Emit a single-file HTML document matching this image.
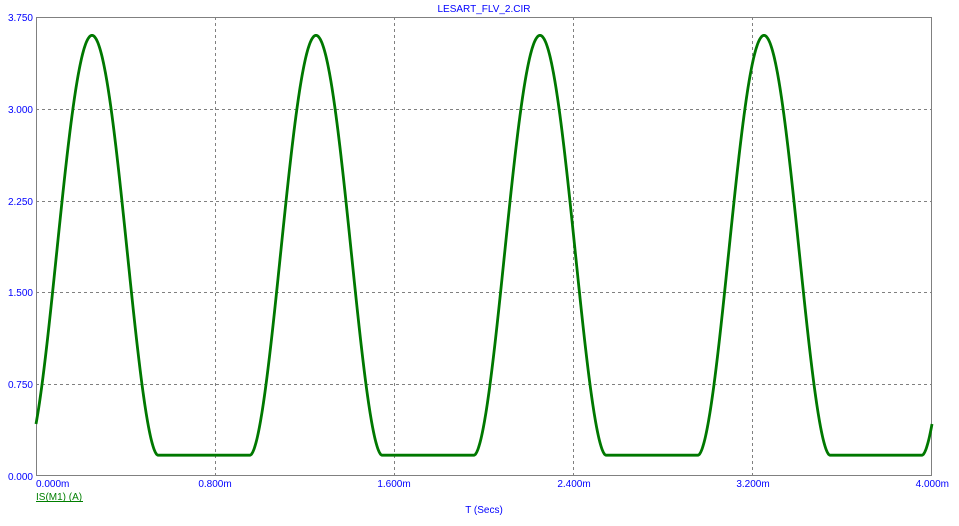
<!DOCTYPE html><html><head><style>body{margin:0;background:#fff;width:959px;height:521px;overflow:hidden}
text{font-family:"Liberation Sans",sans-serif;font-size:10px;fill:#0000ff}</style></head><body>
<svg width="959" height="521" xmlns="http://www.w3.org/2000/svg">
<g stroke="#808080" stroke-dasharray="3,3" stroke-width="1">
<line x1="215.5" y1="17" x2="215.5" y2="476"/><line x1="394.5" y1="17" x2="394.5" y2="476"/><line x1="573.5" y1="17" x2="573.5" y2="476"/><line x1="752.5" y1="17" x2="752.5" y2="476"/>
<line x1="36" y1="109.5" x2="932" y2="109.5"/><line x1="36" y1="201.5" x2="932" y2="201.5"/><line x1="36" y1="292.5" x2="932" y2="292.5"/><line x1="36" y1="384.5" x2="932" y2="384.5"/>
</g>
<rect x="36.5" y="17.5" width="895" height="458" fill="none" stroke="#808080"/>
<path id="w" fill="none" stroke="#007800" stroke-width="2.8"/>
<text x="484" y="12" text-anchor="middle">LESART_FLV_2.CIR</text>
<g text-anchor="end"><text x="33" y="21">3.750</text><text x="33" y="113">3.000</text><text x="33" y="205">2.250</text><text x="33" y="296">1.500</text><text x="33" y="388">0.750</text><text x="33" y="480">0.000</text></g>
<text x="36" y="487">0.000m</text>
<g text-anchor="middle"><text x="215" y="487">0.800m</text><text x="394" y="487">1.600m</text><text x="574" y="487">2.400m</text><text x="753" y="487">3.200m</text></g>
<text x="949" y="487" text-anchor="end">4.000m</text>
<text x="36" y="500" style="fill:#007f00;text-decoration:underline">IS(M1) (A)</text>
<line x1="36" y1="501.5" x2="83" y2="501.5" stroke="#007f00"/>
<text x="484" y="513" text-anchor="middle">T (Secs)</text>
</svg>
<script>
var p=[],W=66;
for(var x=36;x<=932;x+=0.5){var t=((x-92)%224+224)%224;var d=Math.min(t,224-t);var f=d<W?Math.pow(Math.cos(Math.PI*d/(2*W)),1.8):0;var v=0.17+3.43*f;var y=476-v/3.75*459;p.push((p.length?'L':'M')+x.toFixed(1)+','+y.toFixed(1));}
document.getElementById('w').setAttribute('d',p.join(''));
</script>
</body></html>
